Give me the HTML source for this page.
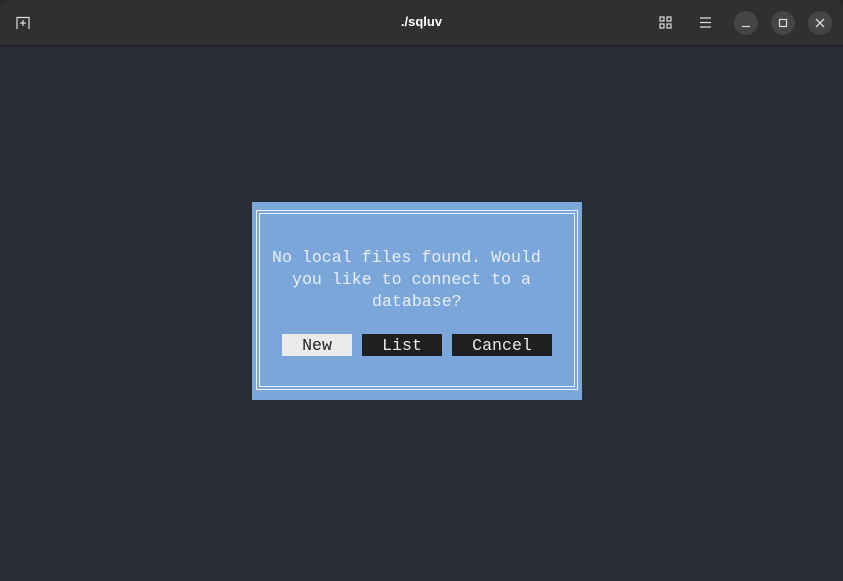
<html><head><style>
body{margin:0;width:843px;height:581px;background:#2a2a2a;overflow:hidden;font-family:"Liberation Mono",monospace}
.win{position:absolute;left:0;top:0;width:843px;height:581px;border-radius:10px 10px 0 0;overflow:hidden;background:#282c34}
.tb{position:absolute;left:0;top:0;width:843px;height:45px;background:#303030;border-bottom:1px solid #1f1f1f}
.title{position:absolute;left:0;width:843px;top:14px;text-align:center;color:#fff;font:bold 13px "Liberation Sans",sans-serif}
.cb{position:absolute;top:11px;width:24px;height:24px;border-radius:50%;background:#454545}
.dlg{position:absolute;left:252px;top:202px;width:330px;height:198px;background:#7aa6da}
.b1{position:absolute;left:4px;top:8px;width:320px;height:178px;border:1px solid #eaf0f8}
.b2{position:absolute;left:7px;top:11px;width:314px;height:172px;border:1px solid #eaf0f8}
.t{position:absolute;color:#e8eef7;font-size:16.6px;white-space:pre;line-height:22px}
.btn{position:absolute;top:132px;height:22px;line-height:24px;text-align:center;font-size:16.6px;color:#e8e8e8;background:#1e1f20}
</style></head><body><div class="win">
<div class="tb">
<svg style="position:absolute;left:16px;top:16px" width="16" height="14" viewBox="0 0 16 14" fill="none" stroke="#ddd" stroke-width="1.2"><path d="M1 13V1.5h12V13M7 4v6M4 7h6"/></svg>
<div class="title">./sqluv</div>
<svg style="position:absolute;left:659px;top:16px" width="14" height="14" fill="none" stroke="#ddd" stroke-width="1.2"><rect x="1" y="1" width="4" height="4"/><rect x="8" y="1" width="4" height="4"/><rect x="1" y="8" width="4" height="4"/><rect x="8" y="8" width="4" height="4"/></svg>
<svg style="position:absolute;left:699px;top:16px" width="14" height="14" stroke="#ddd" stroke-width="1.2"><path d="M1 2h11M1 6.5h11M1 11h11"/></svg>
<div class="cb" style="left:734px"><svg width="24" height="24" stroke="#ddd" stroke-width="1.2"><path d="M8 15.5h8"/></svg></div>
<div class="cb" style="left:771px"><svg width="24" height="24" fill="none" stroke="#ddd" stroke-width="1.2"><rect x="8.5" y="8.5" width="7" height="7"/></svg></div>
<div class="cb" style="left:808px"><svg width="24" height="24" stroke="#ddd" stroke-width="1.3"><path d="M8 8l8 8M16 8l-8 8"/></svg></div>
</div>
<div class="dlg"><div class="b1"></div><div class="b2"></div>
<div class="t" style="top:45px;left:20px">No local files found. Would</div>
<div class="t" style="top:67px;left:40px">you like to connect to a</div>
<div class="t" style="top:89px;left:120px">database?</div>
<div class="btn" style="left:30px;width:70px;background:#ebebeb;color:#222">New</div>
<div class="btn" style="left:110px;width:80px">List</div>
<div class="btn" style="left:200px;width:100px">Cancel</div>
</div></div></body></html>
